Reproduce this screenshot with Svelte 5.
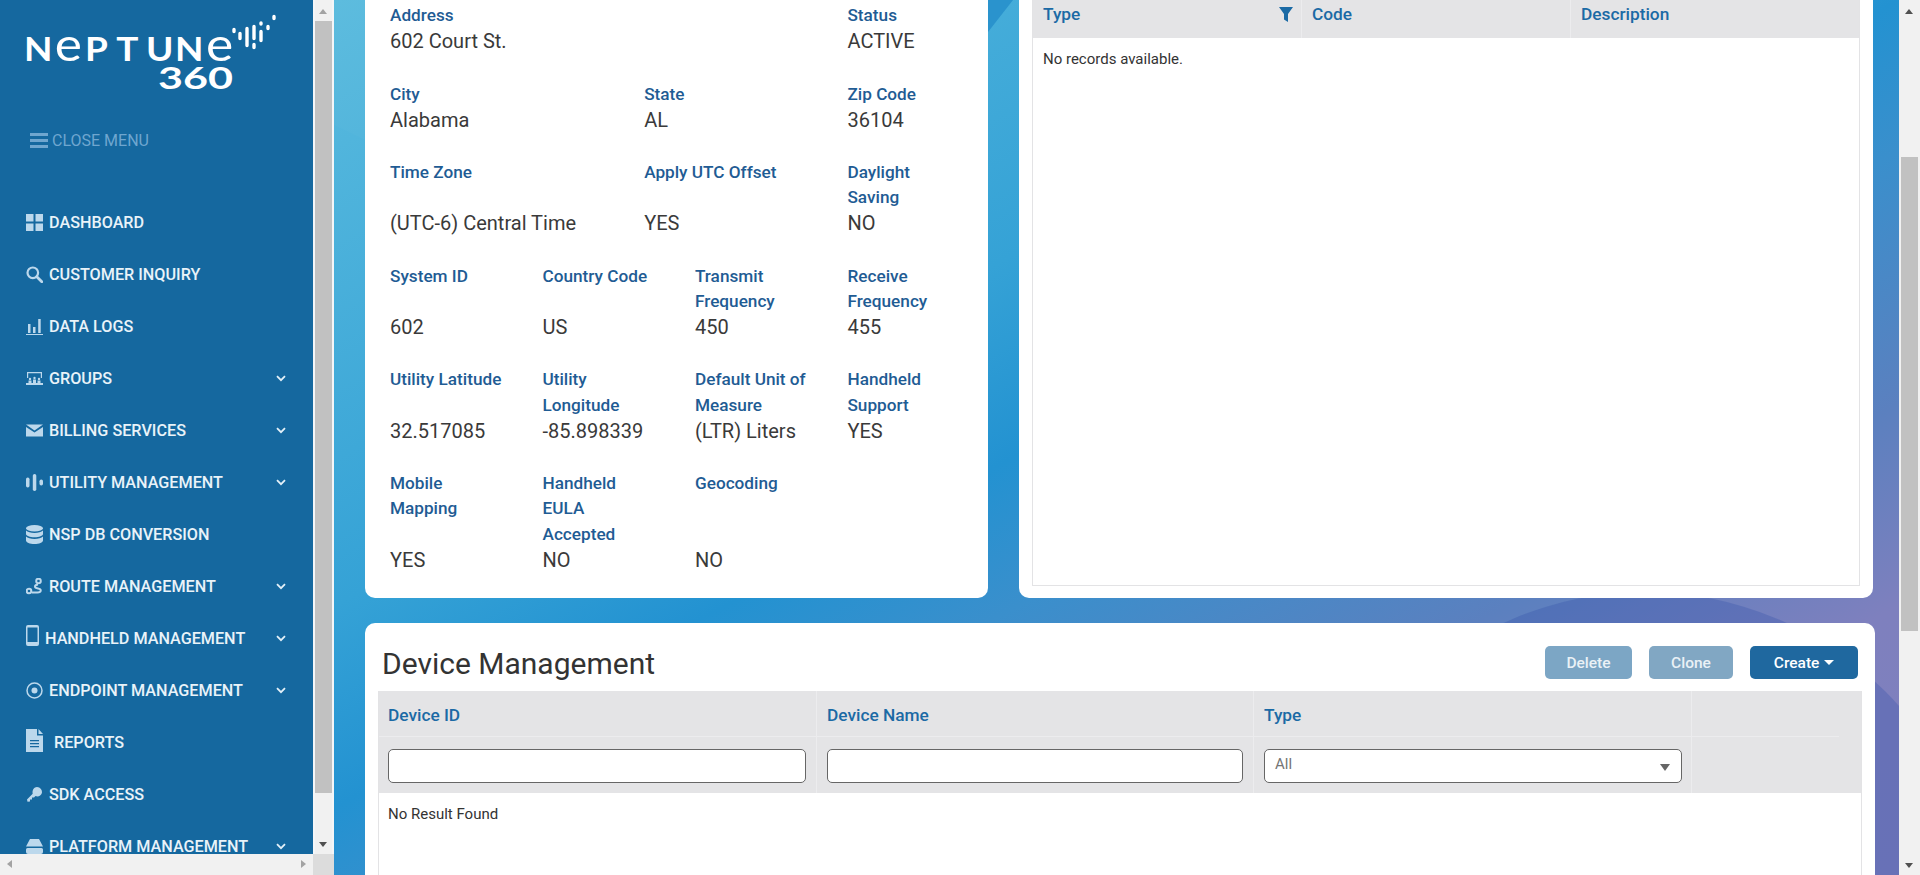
<script>
  const nav = [
    { label: 'DASHBOARD', icon: 'dash' },
    { label: 'CUSTOMER INQUIRY', icon: 'search' },
    { label: 'DATA LOGS', icon: 'chart' },
    { label: 'GROUPS', icon: 'groups', more: true },
    { label: 'BILLING SERVICES', icon: 'mail', more: true },
    { label: 'UTILITY MANAGEMENT', icon: 'util', more: true },
    { label: 'NSP DB CONVERSION', icon: 'db' },
    { label: 'ROUTE MANAGEMENT', icon: 'route', more: true },
    { label: 'HANDHELD MANAGEMENT', icon: 'phone', more: true },
    { label: 'ENDPOINT MANAGEMENT', icon: 'target', more: true },
    { label: 'REPORTS', icon: 'doc' },
    { label: 'SDK ACCESS', icon: 'key' },
    { label: 'PLATFORM MANAGEMENT', icon: 'drive', more: true }
  ];

  // icons that are not the usual 17x17 box
  const sizes = { phone: [13, 21], doc: [17, 23], db: [17, 19] };
  const size = (icon) => sizes[icon] || [17, 17];

  const rows = [
    [{ s: 9, l: ['Address'], v: '602 Court St.' }, { s: 3, l: ['Status'], v: 'ACTIVE' }],
    [{ s: 5, l: ['City'], v: 'Alabama' }, { s: 4, l: ['State'], v: 'AL' }, { s: 3, l: ['Zip Code'], v: '36104' }],
    [{ s: 5, l: ['Time Zone'], v: '(UTC-6) Central Time' }, { s: 4, l: ['Apply UTC Offset'], v: 'YES' }, { s: 3, l: ['Daylight', 'Saving'], v: 'NO' }],
    [{ s: 3, l: ['System ID'], v: '602' }, { s: 3, l: ['Country Code'], v: 'US' }, { s: 3, l: ['Transmit', 'Frequency'], v: '450' }, { s: 3, l: ['Receive', 'Frequency'], v: '455' }],
    [{ s: 3, l: ['Utility Latitude'], v: '32.517085' }, { s: 3, l: ['Utility', 'Longitude'], v: '-85.898339' }, { s: 3, l: ['Default Unit of', 'Measure'], v: '(LTR) Liters' }, { s: 3, l: ['Handheld', 'Support'], v: 'YES' }],
    [{ s: 3, l: ['Mobile', 'Mapping'], v: 'YES' }, { s: 3, l: ['Handheld', 'EULA', 'Accepted'], v: 'NO' }, { s: 3, l: ['Geocoding'], v: 'NO' }]
  ];
</script>

<div class="page">
  <aside class="side">
    <div class="side-inner">
      <svg class="logo" width="260" height="85" viewBox="0 0 260 85">
        <g fill="#fff" font-family="Lato, sans-serif" font-weight="700">
          <text y="51" font-size="33" transform="scale(1.12 1)"><tspan x="3.600">N</tspan><tspan x="31" font-size="46" font-weight="400">e</tspan><tspan x="58">P</tspan><tspan x="86">T</tspan><tspan x="112.500">U</tspan><tspan x="138.500">N</tspan><tspan x="166" font-size="46" font-weight="400">e</tspan></text>
          <text x="138" y="79" font-size="31" textLength="75" lengthAdjust="spacingAndGlyphs">360</text>
        </g>
        <path
          d="M214 19.500v2M220 23.500v5M227 18.500v17M234 34.500v3M234 16.500v12M241 13v1M241 21.500v9M248 16.500v2M254 6.500v2"
          stroke="#fff"
          stroke-width="3.400"
          stroke-linecap="round"
        />
      </svg>

      <div class="close-menu">
        <svg width="18" height="15" viewBox="0 0 18 15"><path d="M0 0h18v3H0zM0 6h18v3H0zM0 12h18v3H0z" fill="#6fa6cf" /></svg>
        <span>CLOSE MENU</span>
      </div>

      <nav>
        {#each nav as item}
          <div class="nav-item" class:wide={item.icon === 'doc'}>
            <svg class="icon" class:narrow={item.icon === 'phone'} viewBox="0 0 {size(item.icon)[0]} {size(item.icon)[1]}" width={size(item.icon)[0]} height={size(item.icon)[1]}>
              {#if item.icon === 'dash'}
                <path d="M0 0h7.500v7.500H0zM9.500 0H17v7.500H9.500zM0 9.500h7.500V17H0zM9.500 9.500H17V17H9.500z" />
              {:else if item.icon === 'search'}
                <circle cx="6.800" cy="6.800" r="5.300" fill="none" stroke="#bcd8ec" stroke-width="2.200" />
                <path d="M10.800 10.800l5 5" stroke="#bcd8ec" stroke-width="2.800" stroke-linecap="round" />
              {:else if item.icon === 'chart'}
                <path d="M2 6h2.500v9H2zM7 9h2.500v6H7zM12.200 1h2.500v14h-2.500zM0 16h17v1H0z" />
              {:else if item.icon === 'groups'}
                <path d="M1 2h15v1.200H1zM1 3h1.200v5H1zM14.800 3H16v5h-1.200z" />
                <path d="M2.500 10.500h3V15h-3zM7 9.500h3V15H7zM11.500 10.500h3V15h-3zM0 13h17v2H0z" />
                <circle cx="4" cy="9" r="1.200" /><circle cx="8.500" cy="8" r="1.200" /><circle cx="13" cy="9" r="1.200" />
              {:else if item.icon === 'mail'}
                <path d="M0 2.500h17L8.500 8.500zM0 5l8.500 5.500L17 5v9.500H0z" />
              {:else if item.icon === 'util'}
                <rect x="0" y="3.500" width="3.500" height="10" rx="1.700" />
                <rect x="6.800" y="0" width="3.500" height="17" rx="1.700" />
                <rect x="13.500" y="5.500" width="3.500" height="6" rx="1.700" />
              {:else if item.icon === 'db'}
                <ellipse cx="8.500" cy="3.200" rx="8.500" ry="3.200" />
                <path d="M0 5.500v3.500c0 1.800 3.800 3.200 8.500 3.200s8.500-1.400 8.500-3.200V5.500c-1.500 1.500-4.800 2.400-8.500 2.400S1.500 7 0 5.500z" />
                <path d="M0 11.500V15.500c0 1.900 3.800 3.500 8.500 3.500s8.500-1.600 8.500-3.500v-4c-1.500 1.500-4.800 2.400-8.500 2.400S1.500 13 0 11.500z" />
              {:else if item.icon === 'route'}
                <circle cx="3" cy="13" r="2.300" fill="none" stroke="#bcd8ec" stroke-width="2" />
                <circle cx="12.500" cy="3" r="2.300" fill="none" stroke="#bcd8ec" stroke-width="2" />
                <path d="M12 6.500c-4 .5-4 3.500 0 4 4 .5 3.500 4-.5 4H6" fill="none" stroke="#bcd8ec" stroke-width="2" />
              {:else if item.icon === 'phone'}
                <path fill-rule="evenodd" d="M2 0h9a2 2 0 0 1 2 2v17a2 2 0 0 1-2 2H2a2 2 0 0 1-2-2V2a2 2 0 0 1 2-2zM1.500 2.500v14.500h10V2.500z" />
              {:else if item.icon === 'target'}
                <circle cx="8.500" cy="8.500" r="7.500" fill="none" stroke="#bcd8ec" stroke-width="1.500" />
                <circle cx="8.500" cy="8.500" r="3" />
              {:else if item.icon === 'doc'}
                <path fill-rule="evenodd" d="M0 0h11v6.500h6V23H0zM4 11v1.300h9V11zM4 14v1.300h9V14zM4 17v1.300h9V17z" />
                <path d="M12.500 0L17 5h-4.500z" />
              {:else if item.icon === 'key'}
                <path d="M11 1a5 5 0 0 1 4.800 6.300C15 10 12 11 9.500 10L8 11.500H6V13.500H4V15.500L1.500 15.800 1 13.500l5.700-5.700C6 5 7.500 1 11 1z" />
              {:else}
                <path d="M4 1h9l4 7.500H0zM1.500 10h14a1.500 1.500 0 0 1 1.500 1.500V14a2 2 0 0 1-2 2H2a2 2 0 0 1-2-2v-2.500A1.500 1.500 0 0 1 1.500 10z" />
              {/if}
            </svg>
            <span class="nav-label">{item.label}</span>
            {#if item.more}
              <svg class="chev" width="10" height="7" viewBox="0 0 10 7"><path d="M1 1.200l4 4 4-4" fill="none" stroke="#e3f0f8" stroke-width="1.800" /></svg>
            {/if}
          </div>
        {/each}
      </nav>
    </div>
    <div class="bar-v">
      <span class="arr up"></span>
      <div class="thumb"></div>
      <span class="arr down"></span>
    </div>
    <div class="bar-h">
      <span class="tri-l"></span>
      <span class="tri-r"></span>
    </div>
    <div class="corner"></div>
  </aside>

  <main class="main">
    <div class="bg-shape corner-a"></div>
    <div class="bg-shape corner-b"></div>
    <div class="bg-shape circle"></div>

    <div class="top-row">
      <section class="card info">
        {#each rows as row}
          <div class="info-row">
            {#each row as f}
              <div class="field" style:grid-column={`span ${f.s}`}>
                <div class="labels">{#each f.l as line}<div>{line}</div>{/each}</div>
                <div class="value">{f.v}</div>
              </div>
            {/each}
          </div>
        {/each}
      </section>

      <section class="card codes">
        <div class="grid">
          <div class="grid-head">
            <div class="th first">
              <span>Type</span>
              <svg width="14" height="15" viewBox="0 0 14 15"><path d="M0 0h14L9 7v8L5 12.500V7z" fill="#1b6aa5" /></svg>
            </div>
            <div class="th second"><span>Code</span></div>
            <div class="th third"><span>Description</span></div>
          </div>
          <p class="empty">No records available.</p>
        </div>
      </section>
    </div>

    <section class="card devices">
      <header class="dev-head">
        <h2>Device Management</h2>
        <div class="actions">
          <button class="btn off" disabled>Delete</button>
          <button class="btn off clone" disabled>Clone</button>
          <button class="btn on">Create <span class="caret"></span></button>
        </div>
      </header>
      <div class="dev-table">
        <div class="dev-row labels-row">
          <div class="cell">Device ID</div>
          <div class="cell">Device Name</div>
          <div class="cell">Type</div>
          <div class="cell"></div>
        </div>
        <div class="dev-row filter-row">
          <div class="cell"><input type="text" /></div>
          <div class="cell"><input type="text" /></div>
          <div class="cell">
            <div class="select"><span>All</span><span class="sel-caret"></span></div>
          </div>
          <div class="cell"></div>
        </div>
        <div class="dev-body">No Result Found</div>
      </div>
    </section>
  </main>

  <div class="page-bar">
    <span class="arr up"></span>
    <div class="thumb"></div>
    <span class="arr down"></span>
  </div>
</div>

<style>
  :global(body) {
    margin: 0;
    font-family: Roboto, sans-serif;
    overflow: hidden;
  }

  .page {
    display: flex;
    width: 1920px;
    height: 875px;
    overflow: hidden;
    background: #fff;
  }

  /* sidebar */
  .side {
    position: relative;
    flex: 0 0 334px;
    height: 875px;
    background: #f4f6f8;
    overflow: hidden;
  }

  .side-inner {
    width: 313px;
    height: 875px;
    background: #15689f;
    overflow: hidden;
  }

  .logo {
    display: block;
    margin: 10px 0 0 20px;
  }

  .close-menu {
    display: flex;
    align-items: center;
    gap: 4px;
    margin: 30px 0 0 30px;
    height: 30px;
    color: #6fa6cf;
    font-size: 16px;
  }

  nav {
    margin-top: 41px;
  }

  .nav-item {
    display: flex;
    align-items: center;
    height: 52px;
    padding-left: 26px;
    color: #e9f3f9;
    font-size: 16.2px;
    font-weight: 500;
    white-space: nowrap;
  }

  .icon {
    flex: none;
    margin-right: 6px;
    fill: #bcd8ec;
  }

  .icon.narrow {
    margin-top: -6px;
    margin-right: 6px;
  }

  .wide .icon {
    margin-right: 11px;
    margin-top: -4px;
  }

  .nav-label {
    flex: 1;
  }

  .chev {
    margin-right: 27px;
  }

  .bar-v {
    position: absolute;
    left: 315px;
    top: 0;
    width: 17px;
    height: 854px;
    background: #f1f1f1;
  }

  .bar-v .thumb {
    position: absolute;
    top: 21px;
    left: 0;
    width: 17px;
    height: 772px;
    background: #c1c1c1;
  }

  .arr {
    position: absolute;
    left: 4px;
    width: 0;
    height: 0;
    border-left: 4.5px solid transparent;
    border-right: 4.5px solid transparent;
  }

  .arr.up {
    top: 9px;
    border-bottom: 5px solid #a3a3a3;
  }

  .arr.down {
    bottom: 7px;
    border-top: 5px solid #505050;
  }

  .bar-h {
    position: absolute;
    left: 0;
    bottom: 0;
    width: 313px;
    height: 21px;
    background: #f1f1f1;
  }

  .tri-l,
  .tri-r {
    position: absolute;
    top: 6px;
    width: 0;
    height: 0;
    border-top: 4.5px solid transparent;
    border-bottom: 4.5px solid transparent;
  }

  .tri-l {
    left: 7px;
    border-right: 5px solid #a3a3a3;
  }

  .tri-r {
    right: 7px;
    border-left: 5px solid #a3a3a3;
  }

  .corner {
    position: absolute;
    left: 313px;
    bottom: 0;
    width: 21px;
    height: 21px;
    background: #dcdcdc;
  }

  /* main area */
  .main {
    position: relative;
    flex: 0 0 1565px;
    height: 875px;
    overflow: hidden;
    padding-left: 31px;
    box-sizing: border-box;
    background: linear-gradient(152.7deg, #5abbde 0%, #35a2d6 36%, #2392d1 48%, #3a8fcc 57%, #5b80bf 72%, #7e80be 84%, #8080bd 100%);
  }

  .bg-shape {
    position: absolute;
  }

  .bg-shape.corner-a {
    left: 0;
    top: 0;
    width: 31px;
    height: 140px;
    background: rgba(255, 255, 255, 0.02);
    clip-path: polygon(0 0, 100% 0, 100% 100%, 0 125px);
  }

  .bg-shape.corner-b {
    left: 654px;
    top: 0;
    width: 25px;
    height: 32px;
    background: #2a93cd;
    clip-path: polygon(0 0, 100% 0, 0 100%);
  }

  .bg-shape.circle {
    left: 971px;
    top: 592px;
    width: 680px;
    height: 680px;
    border-radius: 50%;
    background: rgba(50, 80, 170, 0.3);
  }

  .top-row {
    position: relative;
    display: flex;
    gap: 31px;
    height: 598px;
  }

  .card {
    background: #fff;
  }

  .info {
    width: 623px;
    height: 598px;
    box-sizing: border-box;
    padding: 3px 0 0 13px;
    border-radius: 0 0 10px 10px;
  }

  .info-row {
    display: grid;
    grid-template-columns: repeat(12, 50.83px);
    margin-bottom: 26.3px;
  }

  .field {
    display: flex;
    flex-direction: column;
    padding-left: 12px;
  }

  .labels {
    flex: 1;
    color: #1f5c94;
    font-size: 17.2px;
    font-weight: 500;
    line-height: 25.2px;
  }

  .value {
    color: #3a3a3a;
    font-size: 20px;
    line-height: 27px;
  }

  .codes {
    width: 854px;
    height: 598px;
    box-sizing: border-box;
    padding: 0 13px 12px;
    border-radius: 0 0 10px 10px;
  }

  .grid {
    height: 100%;
    box-sizing: border-box;
    border: 1px solid #e3e3e5;
    border-top: 0;
  }

  .grid-head {
    display: flex;
    height: 38px;
    background: #e4e4e6;
    color: #1b6aa5;
    font-size: 17.3px;
    font-weight: 500;
  }

  .th {
    display: flex;
    align-items: center;
    justify-content: space-between;
    box-sizing: border-box;
    padding: 0 10px 10px;
    border-right: 1px solid #ececee;
  }

  .th.first {
    width: 269px;
    padding-right: 8.5px;
  }

  .th.second {
    width: 269px;
  }

  .th.third {
    flex: 1;
    border-right: 0;
  }

  .empty {
    margin: 11px 0 0 10px;
    font-size: 15px;
    line-height: 20px;
    color: #333;
  }

  .devices {
    position: relative;
    width: 1510px;
    margin-top: 25px;
    height: 300px;
    box-sizing: border-box;
    padding: 0 13px;
    border-radius: 10px 10px 0 0;
  }

  .dev-head {
    display: flex;
    justify-content: space-between;
    align-items: flex-start;
    height: 68px;
  }

  h2 {
    margin: 22px 0 0 4px;
    font-size: 30px;
    font-weight: 400;
    line-height: 38px;
    color: #333;
  }

  .actions {
    display: flex;
    gap: 17px;
    margin: 23px 4px 0 0;
  }

  .btn {
    height: 33px;
    border: 0;
    border-radius: 5px;
    color: #fff;
    font-family: Roboto, sans-serif;
    font-size: 15.5px;
    font-weight: 500;
    padding: 0;
  }

  .btn.off {
    width: 87px;
    background: #7ca6c5;
    color: #eaf1f6;
  }

  .btn.off.clone {
    width: 84px;
    background: #81a7c3;
  }

  .btn.on {
    width: 108px;
    background: #1f689f;
  }

  .caret {
    display: inline-block;
    width: 0;
    height: 0;
    margin-left: 1px;
    vertical-align: 3px;
    border-left: 5px solid transparent;
    border-right: 5px solid transparent;
    border-top: 5px solid #fff;
  }

  .dev-table {
    width: 1484px;
    height: 300px;
    border-right: 1px solid #e3e3e5;
    border-left: 1px solid #e3e3e5;
    box-sizing: border-box;
  }

  .dev-row {
    display: grid;
    grid-template-columns: 438px 437px 438px 1fr;
    background: #e4e4e6;
  }

  .labels-row {
    height: 46px;
    color: #1b6aa5;
    font-size: 17.3px;
    font-weight: 500;
  }

  .labels-row .cell {
    padding: 14px 0 0 10px;
    line-height: 20px;
    border-bottom: 1px solid #ececee;
  }

  .labels-row .cell:first-child {
    padding-left: 9px;
  }

  .labels-row .cell:last-child {
    margin-right: 22px;
  }

  .filter-row {
    height: 56px;
  }

  .cell {
    box-sizing: border-box;
    border-right: 1px solid #ececee;
  }

  .cell:last-child {
    border-right: 0;
  }

  .filter-row .cell {
    padding: 12px 10px 0 10px;
  }

  .filter-row .cell:first-child {
    padding-left: 9px;
  }

  .filter-row .cell:nth-child(3) {
    padding-right: 9px;
  }

  input,
  .select {
    display: block;
    width: 100%;
    height: 34px;
    box-sizing: border-box;
    border: 1px solid #666;
    border-radius: 5px;
    background: #fff;
    padding: 0 10px;
    font-family: Roboto, sans-serif;
  }

  .select {
    position: relative;
    padding: 5px 10px;
    color: #757575;
    font-size: 15px;
    line-height: 18px;
  }

  .sel-caret {
    position: absolute;
    right: 11px;
    top: 14px;
    width: 0;
    height: 0;
    border-left: 5px solid transparent;
    border-right: 5px solid transparent;
    border-top: 7px solid #666;
  }

  .dev-body {
    padding: 11px 0 0 9px;
    font-size: 15px;
    line-height: 20px;
    color: #333;
  }

  /* page scrollbar */
  .page-bar {
    position: relative;
    flex: 0 0 21px;
    height: 875px;
    background: #f1f1f1;
  }

  .page-bar .thumb {
    position: absolute;
    left: 2px;
    top: 157px;
    width: 17px;
    height: 474px;
    background: #c1c1c1;
  }

  .page-bar .arr {
    left: 6px;
  }

  .page-bar .arr.up {
    border-bottom-color: #505050;
  }
</style>
